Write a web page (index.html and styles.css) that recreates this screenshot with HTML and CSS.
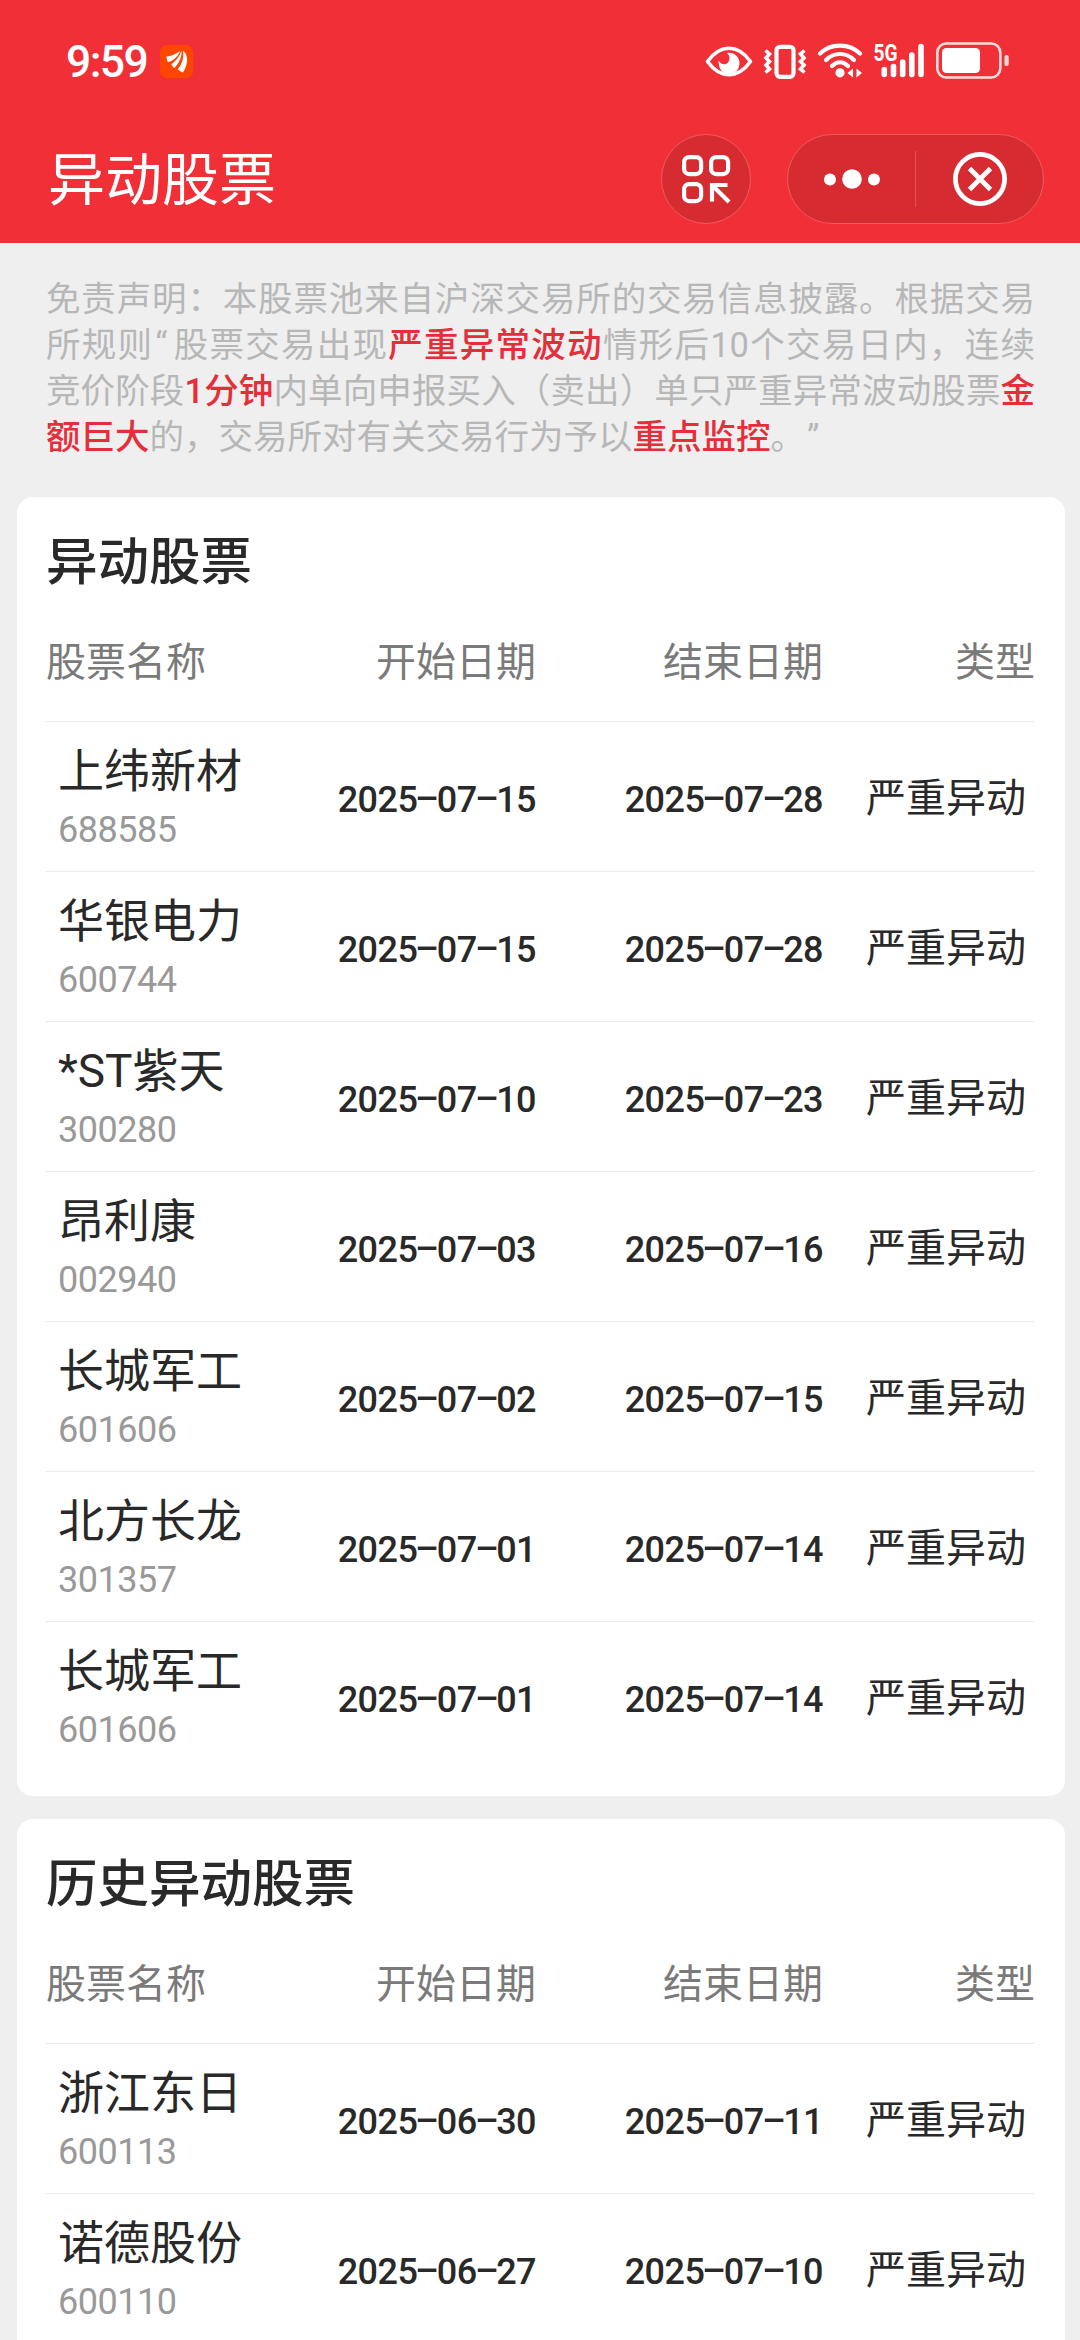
FILE: index.html
```html
<!DOCTYPE html>
<html lang="zh-CN">
<head>
    <meta charset="UTF-8">
    <meta name="viewport" content="width=device-width, initial-scale=1.0">
    <title>异动股票</title>
    <link rel="stylesheet" href="styles.css">
</head>
<body>
    <header class="header">
        <div class="status-bar">
            <div class="status-left">
                <span class="clock">9:59</span>
                <svg class="app-icon" width="33" height="33" viewBox="0 0 33 33">
                    <rect width="33" height="33" rx="7" fill="#ff4600"/>
                    <g fill="#fff">
                        <path d="M6.500 11.500C11 11 15 9.500 20 6C18.500 11 14 15.500 8 17.200C7 15.500 6.500 13.500 6.500 11.500Z"/>
                        <path d="M21.500 5.800C22 11.500 19.500 17.500 14.500 23C12.800 22 11.800 20.800 11.400 19.300C16 16 19.500 11.500 21.500 5.800Z"/>
                        <path d="M23 5.800C28 9.500 29 18 23 27.500C21 26.800 19 25.500 17.800 24.200C22.500 18.500 24 12 23 5.800Z"/>
                    </g>
                </svg>
            </div>
            <svg class="status-icons" width="310" height="50" viewBox="700 36 310 50">
                <!-- eye -->
                <path d="M707.500 61.500C714 52.500 720.500 48.300 729 48.300S744 52.500 750.500 61.500C744 70.500 737.500 74.700 729 74.700S714 70.500 707.500 61.500Z" fill="none" stroke="#fff" stroke-width="3.600" stroke-linejoin="round"/>
                <path d="M727 53C734 52 739.500 57 739.500 63C739.500 69.500 735 74 729 74C722.500 74 718.500 69 718.500 60.500C721 64.500 725 65.500 727.500 63C730.500 60 730 55.500 727 53Z" fill="#fff"/>
                <!-- vibrate -->
                <rect x="776.500" y="46.800" width="17" height="30" rx="3.500" fill="none" stroke="#fff" stroke-width="4.200"/>
                <path d="M765.500 50.500L769.500 54L766 58L769.500 61.500L766 65L769.500 69L765.500 72.500M804.500 50.500L800.500 54L804 58L800.500 61.500L804 65L800.500 69L804.500 72.500" fill="none" stroke="#fff" stroke-width="3.600"/>
                <!-- wifi -->
                <g fill="none" stroke="#fff" stroke-width="4.200" stroke-linecap="round">
                    <path d="M820 53.500C831 43 849 43 860 53.500"/>
                    <path d="M826 60C834 52 846 52 854 60"/>
                    <path d="M832 66C837 61 843 61 848 66"/>
                </g>
                <circle cx="840" cy="72.800" r="4.600" fill="#fff"/>
                <path d="M847.500 73L853 68.500V77.500ZM862 73L856.500 68.500V77.500Z" fill="#fff"/>
                <!-- signal -->
                <text x="873.500" y="60.500" class="network" textLength="24" lengthAdjust="spacingAndGlyphs">5G</text>
                <g stroke="#fff" stroke-width="5.600" stroke-linecap="round">
                    <path d="M884.300 69.500V74.500M893.500 66.500V74.500M902.700 62V74.500M911.800 55V74.500M921 46.500V74.500"/>
                </g>
                <!-- battery -->
                <rect x="937.300" y="43.500" width="63" height="34" rx="9" fill="none" stroke="#ffdcdc" stroke-width="2.600"/>
                <rect x="942" y="48" width="38" height="25" rx="4.500" fill="#fff"/>
                <rect x="1004.500" y="55" width="4.200" height="11" rx="2" fill="#ffdcdc"/>
            </svg>
        </div>
        <div class="nav-bar">
            <h1>异动股票</h1>
            <div class="nav-actions">
                <button class="scan-btn" aria-label="扫码">
                    <svg width="50" height="50" viewBox="0 0 50 50" fill="none" stroke="#fff" stroke-width="4.200">
                        <rect x="3.100" y="3.100" width="17" height="17" rx="5"/>
                        <rect x="30.100" y="3.100" width="17" height="17" rx="5"/>
                        <rect x="3.100" y="30.100" width="17" height="17" rx="5"/>
                        <path d="M46.500 31H31V47.500M32 32L48 48"/>
                    </svg>
                </button>
                <div class="capsule">
                    <button aria-label="更多">
                        <svg width="56" height="20" viewBox="0 0 56 20" fill="#fff">
                            <circle cx="6" cy="10.500" r="6"/>
                            <circle cx="28" cy="10" r="9.800"/>
                            <circle cx="50" cy="10.500" r="6"/>
                        </svg>
                    </button>
                    <span class="divider"></span>
                    <button aria-label="关闭">
                        <svg width="54" height="54" viewBox="0 0 54 54" fill="none" stroke="#fff" stroke-width="4.800">
                            <circle cx="27" cy="27" r="24.600"/>
                            <path d="M16.500 16.500L37.500 37.500M37.500 16.500L16.500 37.500"/>
                        </svg>
                    </button>
                </div>
            </div>
        </div>
    </header>

    <main>
        <p class="notice">
            <span class="line">免责声明：本股票池来自沪深交易所的交易信息披露。根据交易</span>
            <span class="line">所规则<span class="open-quote">“</span>股票交易出现<b>严重异常波动</b>情形后10个交易日内，连续</span>
            <span class="line">竞价阶段<b>1分钟</b>内单向申报买入（卖出）单只严重异常波动股票<b>金</b></span>
            <span class="line last"><b>额巨大</b>的，交易所对有关交易行为予以<b>重点监控</b>。<span class="close-quote">”</span></span>
        </p>

        <section class="card">
            <h2>异动股票</h2>
            <div class="row head">
                <span>股票名称</span><span>开始日期</span><span>结束日期</span><span>类型</span>
            </div>
            <div id="current"></div>
        </section>

        <section class="card">
            <h2>历史异动股票</h2>
            <div class="row head">
                <span>股票名称</span><span>开始日期</span><span>结束日期</span><span>类型</span>
            </div>
            <div id="history"></div>
        </section>
    </main>

    <script src="script.js"></script>
</body>
</html>
```

FILE: styles.css
```css
:root {
    --red: #f12f37;
    --text: #292929;
    --line: #ececec;
}

* {
    box-sizing: border-box;
    margin: 0;
    padding: 0;
}

body {
    height: 2340px;
    overflow: hidden;
    font-family: Roboto, "Noto Sans CJK SC", sans-serif;
    color: var(--text);
    background-color: #efefef;
}

button {
    display: flex;
    align-items: center;
    justify-content: center;
    border: none;
    background: none;
}

svg {
    display: block;
}

/* Header */
.header {
    height: 243px;
    background-color: var(--red);
    color: white;
}

.status-bar {
    display: flex;
    justify-content: space-between;
    height: 134px;
    padding: 36px 70px 0 66px;
}

.status-left {
    display: flex;
    align-items: center;
    gap: 12px;
    height: 50px;
}

.clock {
    width: 82px;
    padding-top: 2px;
    font-size: 44.5px;
    font-weight: 500;
    line-height: 50px;
    letter-spacing: -1.6px;
}

.network {
    font-size: 23.5px;
    font-weight: 700;
    fill: white;
}

.nav-bar {
    display: flex;
    justify-content: space-between;
    align-items: center;
    height: 90px;
    padding: 0 36px 0 48px;
}

h1 {
    padding-top: 3px;
    font-size: 57px;
    font-weight: 400;
    line-height: 90px;
}

.nav-actions {
    display: flex;
    gap: 36px;
}

.scan-btn,
.capsule {
    height: 90px;
    background-color: #d62b31;
    border: 1px solid #f05a60;
    border-radius: 45px;
}

.scan-btn {
    width: 90px;
}

.capsule {
    display: flex;
    align-items: center;
    width: 257px;
}

.capsule button {
    width: 127px;
    height: 88px;
}

.divider {
    width: 1px;
    height: 56px;
    background-color: #ed4b52;
}

/* Notice */
.notice {
    padding: 33px 45px 37px 46px;
    font-size: 34.5px;
    line-height: 46px;
    text-spacing-trim: space-all;
    color: #b7b7b7;
}

.notice .line {
    display: block;
    height: 46px;
    text-align: justify;
    text-align-last: justify;
    text-justify: inter-character;
    white-space: nowrap;
}

.notice .last {
    text-align-last: left;
}

.notice b {
    font-weight: 500;
    color: #e62e3a;
}

.open-quote {
    margin: 0 5px 0 2px;
}

.close-quote {
    margin-left: 2px;
}

/* Cards */
.card {
    margin: 0 15px 23px 17px;
    padding: 32px 30px 24px 29px;
    background-color: white;
    border-radius: 16px;
}

h2 {
    height: 66px;
    font-size: 51.5px;
    font-weight: 500;
    line-height: 68px;
}

.row {
    display: grid;
    grid-template-columns: 203px 287px 287px 1fr;
    align-items: center;
    height: 150px;
    border-bottom: 1px solid var(--line);
    text-align: right;
}

.row:last-child {
    border-bottom-color: transparent;
}

.row > :first-child {
    text-align: left;
}

.row.head {
    height: 127px;
    padding-top: 1px;
    font-size: 40px;
    color: #7a7a7a;
    white-space: nowrap;
}

.stock {
    padding: 6px 0 0 12px;
    white-space: nowrap;
}

.name {
    font-size: 46px;
    line-height: 60px;
}

.code {
    font-size: 36px;
    line-height: 58px;
    letter-spacing: -0.5px;
    color: #999;
}

.date {
    padding-top: 7px;
    font-size: 36px;
    font-weight: 500;
    letter-spacing: -0.55px;
    white-space: nowrap;
}

.dash {
    display: inline-block;
    width: 19.5px;
    text-align: center;
    transform: translateY(-2px) scaleX(2);
}

.type {
    padding: 0 9px 3px 0;
    font-size: 40px;
    white-space: nowrap;
}
```

FILE: script.js
```js
const current = [
    ['上纬新材', '688585', '2025-07-15', '2025-07-28'],
    ['华银电力', '600744', '2025-07-15', '2025-07-28'],
    ['*ST紫天', '300280', '2025-07-10', '2025-07-23'],
    ['昂利康', '002940', '2025-07-03', '2025-07-16'],
    ['长城军工', '601606', '2025-07-02', '2025-07-15'],
    ['北方长龙', '301357', '2025-07-01', '2025-07-14'],
    ['长城军工', '601606', '2025-07-01', '2025-07-14']
];

const history = [
    ['浙江东日', '600113', '2025-06-30', '2025-07-11'],
    ['诺德股份', '600110', '2025-06-27', '2025-07-10']
];

// Dashes take the width of a digit
function formatDate(date) {
    return date.replace(/-/g, '<span class="dash">-</span>');
}

function renderRows(id, stocks) {
    document.getElementById(id).innerHTML = stocks.map(([name, code, start, end]) => `
        <div class="row">
            <div class="stock">
                <div class="name">${name}</div>
                <div class="code">${code}</div>
            </div>
            <div class="date">${formatDate(start)}</div>
            <div class="date">${formatDate(end)}</div>
            <div class="type">严重异动</div>
        </div>`).join('');
}

renderRows('current', current);
renderRows('history', history);
```
